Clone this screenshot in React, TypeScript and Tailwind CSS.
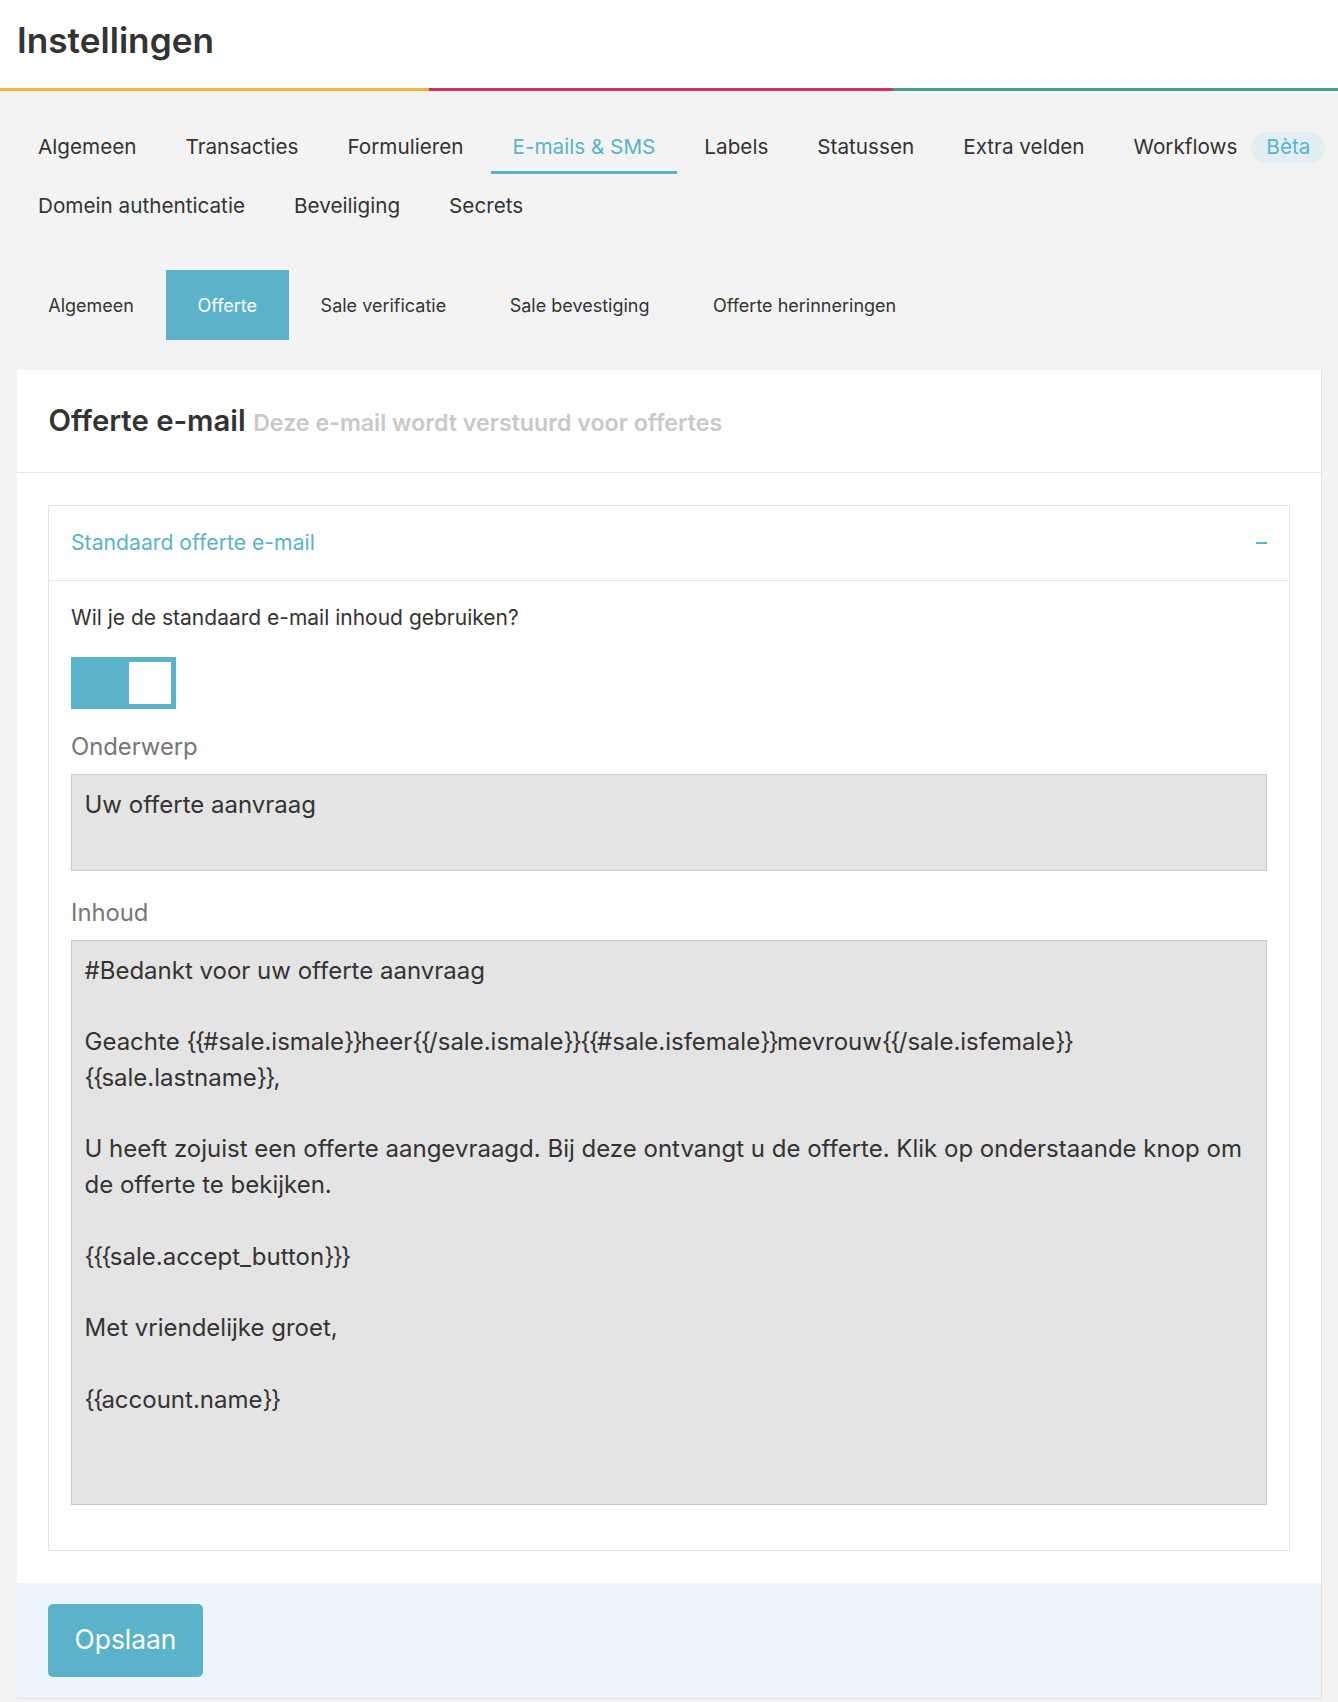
import React from "react";

const mainTabs = ["Algemeen", "Transacties", "Formulieren", "E-mails & SMS", "Labels", "Statussen", "Extra velden", "Workflows"];
const moreTabs = ["Domein authenticatie", "Beveiliging", "Secrets"];
const subTabs = ["Algemeen", "Offerte", "Sale verificatie", "Sale bevestiging", "Offerte herinneringen"];

const bodyLines = [
  "#Bedankt voor uw offerte aanvraag",
  "",
  "Geachte {{#sale.ismale}}heer{{/sale.ismale}}{{#sale.isfemale}}mevrouw{{/sale.isfemale}}",
  "{{sale.lastname}},",
  "",
  "U heeft zojuist een offerte aangevraagd. Bij deze ontvangt u de offerte. Klik op onderstaande knop om",
  "de offerte te bekijken.",
  "",
  "{{{sale.accept_button}}}",
  "",
  "Met vriendelijke groet,",
  "",
  "{{account.name}}",
];

// Template braces are set a little tighter than the surrounding text.
function TemplateLine({ text }: { text: string }) {
  const parts = text.split(/([{}]+)/);
  return (
    <>
      {parts.map((p, i) =>
        /^[{}]+$/.test(p) ? (
          <span key={i} className="tracking-[-1.8px]">
            {p}
          </span>
        ) : (
          <span key={i}>{p}</span>
        )
      )}
    </>
  );
}

function Tab({ label, active, badge }: { label: string; active?: boolean; badge?: string }) {
  return (
    <div
      className={`mx-[2.5px] px-[22px] pt-[18px] pb-[10px] border-b-[3px] flex items-center text-[20.7px] leading-[28px] whitespace-nowrap ${
        active ? "border-[#5ab3c8] text-[#5ab3c8]" : "border-transparent text-[#333]"
      }`}
    >
      <span>{label}</span>
      {badge && (
        <span className="ml-[14px] -my-[1.5px] h-[31px] px-[15px] rounded-full bg-[#e2eef2] text-[#5ab3c8] flex items-center">
          {badge}
        </span>
      )}
    </div>
  );
}

export default function App() {
  return (
    <div className="min-h-screen bg-[#f3f3f3] font-['Inter',_sans-serif] text-[#333]">
      <header className="bg-white">
        <div className="h-[88px] flex items-center pb-[6px] pl-[17px]">
          <h1 className="text-[35.2px] font-semibold leading-none text-[#333]">Instellingen</h1>
        </div>
        <div className="flex h-[3px]">
          <div className="w-[429px] bg-[#f1b43d]" />
          <div className="w-[464px] bg-[#d5305f]" />
          <div className="flex-1 bg-[#4b9b90]" />
        </div>
      </header>

      <nav className="pt-[24px] pl-[13.5px]">
        <div className="flex">
          {mainTabs.map((t) => (
            <Tab key={t} label={t} active={t === "E-mails & SMS"} badge={t === "Workflows" ? "Bèta" : undefined} />
          ))}
        </div>
        <div className="flex">
          {moreTabs.map((t) => (
            <Tab key={t} label={t} />
          ))}
        </div>
      </nav>

      <div className="mt-[37px] pl-[16.5px] flex">
        {subTabs.map((t) => (
          <div
            key={t}
            className={`h-[70px] px-[31.75px] flex items-center text-[18px] whitespace-nowrap ${
              t === "Offerte" ? "bg-[#5ab3c8] text-white" : "text-[#333]"
            }`}
          >
            {t}
          </div>
        ))}
      </div>

      <section className="mx-[17px] mt-[30px] bg-white shadow-[1px_1px_0_#e3e3e3]">
        <div className="h-[103px] px-[31.5px] flex items-center border-b border-[#e6e6e6]">
          <div className="flex items-baseline">
            <h2 className="text-[29.3px] font-semibold text-[#333]">Offerte e-mail</h2>
            <span className="ml-[7.5px] text-[23.2px] font-semibold text-[#c9c9c9]">
              Deze e-mail wordt verstuurd voor offertes
            </span>
          </div>
        </div>

        <div className="px-[31px] pt-[32px] pb-[32px]">
          <div className="border border-[#e3e3e3]">
            <div className="h-[75px] px-[22px] flex items-center justify-between border-b border-[#e3e3e3]">
              <span className="text-[21.2px] text-[#5ab3c8]">Standaard offerte e-mail</span>
              <span className="w-[11px] h-[2px] bg-[#5ab3c8]" />
            </div>

            <div className="px-[22px] pt-[21.5px] pb-[22px]">
              <p className="text-[21px] leading-[29.7px] text-[#333]">Wil je de standaard e-mail inhoud gebruiken?</p>

              <div className="mt-[24.5px] w-[105px] h-[52px] bg-[#5ab3c8] flex items-center justify-end pr-[5px]">
                <div className="w-[42px] h-[42px] bg-white" />
              </div>

              <label className="block mt-[21px] mb-[11px] text-[23.8px] leading-[33px] text-[#777]">Onderwerp</label>
              <div className="h-[97px] border border-[#cacaca] bg-[#e4e4e4] px-[12.5px] pt-[12px] text-[24px] leading-[35.75px] text-[#333]">
                Uw offerte aanvraag
              </div>

              <label className="block mt-[25.5px] mb-[10.5px] text-[23.8px] leading-[33px] text-[#777]">Inhoud</label>
              <div className="h-[565px] border border-[#cacaca] bg-[#e4e4e4] px-[12.5px] pt-[12px] text-[24px] leading-[35.75px] text-[#333] whitespace-pre">
                {bodyLines.map((line, i) => (
                  <div key={i} className="h-[35.75px]">
                    <TemplateLine text={line} />
                  </div>
                ))}
              </div>
              <div className="h-[23px]" />
            </div>
          </div>
        </div>

        <div className="bg-[#edf4fa] px-[31px] py-[21px]">
          <button className="h-[73px] w-[155px] rounded-[5px] bg-[#5ab3c8] text-white text-[26.4px]">Opslaan</button>
        </div>
      </section>
    </div>
  );
}
